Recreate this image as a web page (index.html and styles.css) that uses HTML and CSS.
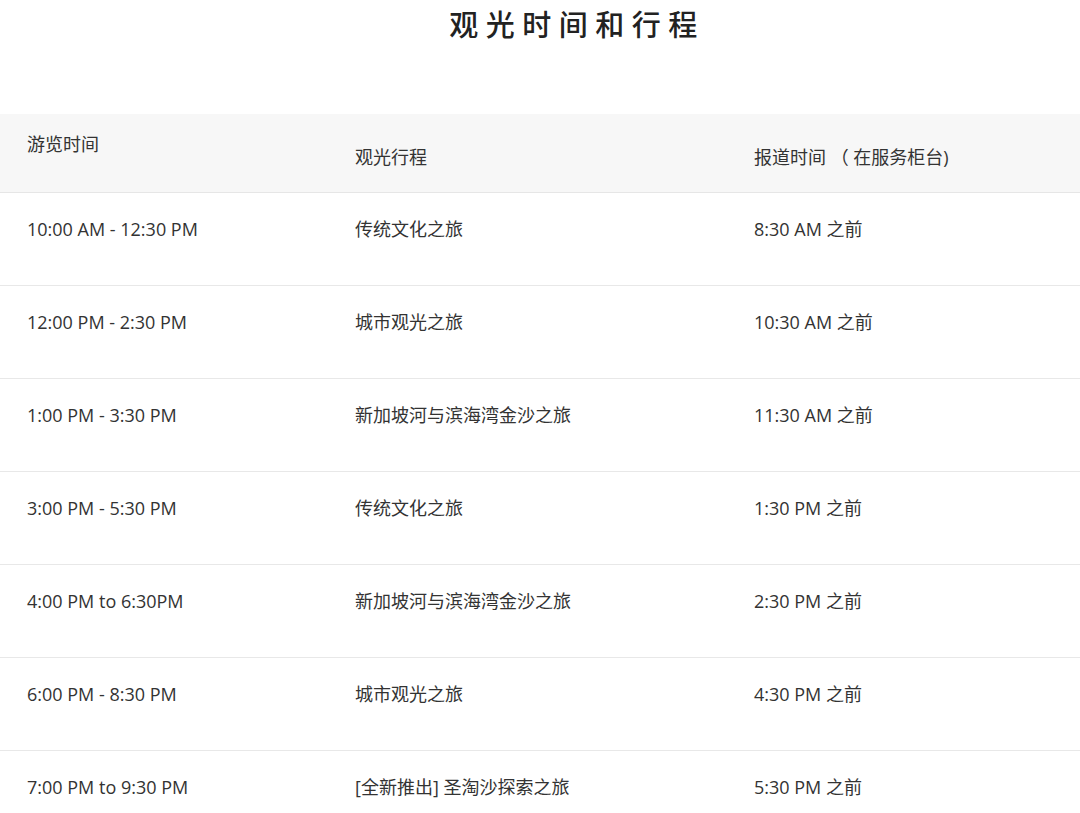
FILE: index.html
```html
<!DOCTYPE html>
<html lang="zh">
<head>
<meta charset="utf-8">
<link rel="stylesheet" href="styles.css">
</head>
<body>
<h1 class="title">观光时间和行程</h1>
<div class="table">
  <div class="row head">
    <div class="cell c1 top">游览时间</div>
    <div class="cell c2">观光行程</div>
    <div class="cell c3">报道时间 （ 在服务柜台)</div>
  </div>
  <div class="row">
    <div class="cell c1">10:00 AM - 12:30 PM</div>
    <div class="cell c2">传统文化之旅</div>
    <div class="cell c3">8:30 AM 之前</div>
  </div>
  <div class="row">
    <div class="cell c1">12:00 PM - 2:30 PM</div>
    <div class="cell c2">城市观光之旅</div>
    <div class="cell c3">10:30 AM 之前</div>
  </div>
  <div class="row">
    <div class="cell c1">1:00 PM - 3:30 PM</div>
    <div class="cell c2">新加坡河与滨海湾金沙之旅</div>
    <div class="cell c3">11:30 AM 之前</div>
  </div>
  <div class="row">
    <div class="cell c1">3:00 PM - 5:30 PM</div>
    <div class="cell c2">传统文化之旅</div>
    <div class="cell c3">1:30 PM 之前</div>
  </div>
  <div class="row">
    <div class="cell c1">4:00 PM to 6:30PM</div>
    <div class="cell c2">新加坡河与滨海湾金沙之旅</div>
    <div class="cell c3">2:30 PM 之前</div>
  </div>
  <div class="row">
    <div class="cell c1">6:00 PM - 8:30 PM</div>
    <div class="cell c2">城市观光之旅</div>
    <div class="cell c3">4:30 PM 之前</div>
  </div>
  <div class="row">
    <div class="cell c1">7:00 PM to 9:30 PM</div>
    <div class="cell c2">[全新推出] 圣淘沙探索之旅</div>
    <div class="cell c3">5:30 PM 之前</div>
  </div>
</div>
</body>
</html>
```
FILE: styles.css
```css
html, body {
  margin: 0;
  padding: 0;
  background: #ffffff;
}
body {
  font-family: "Open Sans", "Noto Sans CJK SC", sans-serif;
  color: #333333;
  width: 1080px;
  overflow: hidden;
}
.title {
  margin: 0;
  height: 114px;
  padding-left: 74px;
  box-sizing: border-box;
  text-align: center;
  font-family: "Noto Sans CJK SC", sans-serif;
  font-size: 29px;
  font-weight: 500;
  line-height: 46px;
  letter-spacing: 7.5px;
  color: #222222;
}
.table {
  display: flex;
  flex-direction: column;
}
.row {
  display: grid;
  grid-template-columns: 328px 399px 1fr;
  height: 93px;
  box-sizing: border-box;
  border-bottom: 1px solid #e8e8e8;
  align-items: start;
  font-size: 18px;
  line-height: 28px;
}
.row.head {
  background: #f7f7f7;
  height: 79px;
  border-bottom: 1px solid #e6e6e6;
}
.cell {
  padding-left: 27px;
  padding-top: 22px;
}
.head .cell {
  padding-top: 29px;
}
.head .cell.top {
  padding-top: 16px;
}
```
